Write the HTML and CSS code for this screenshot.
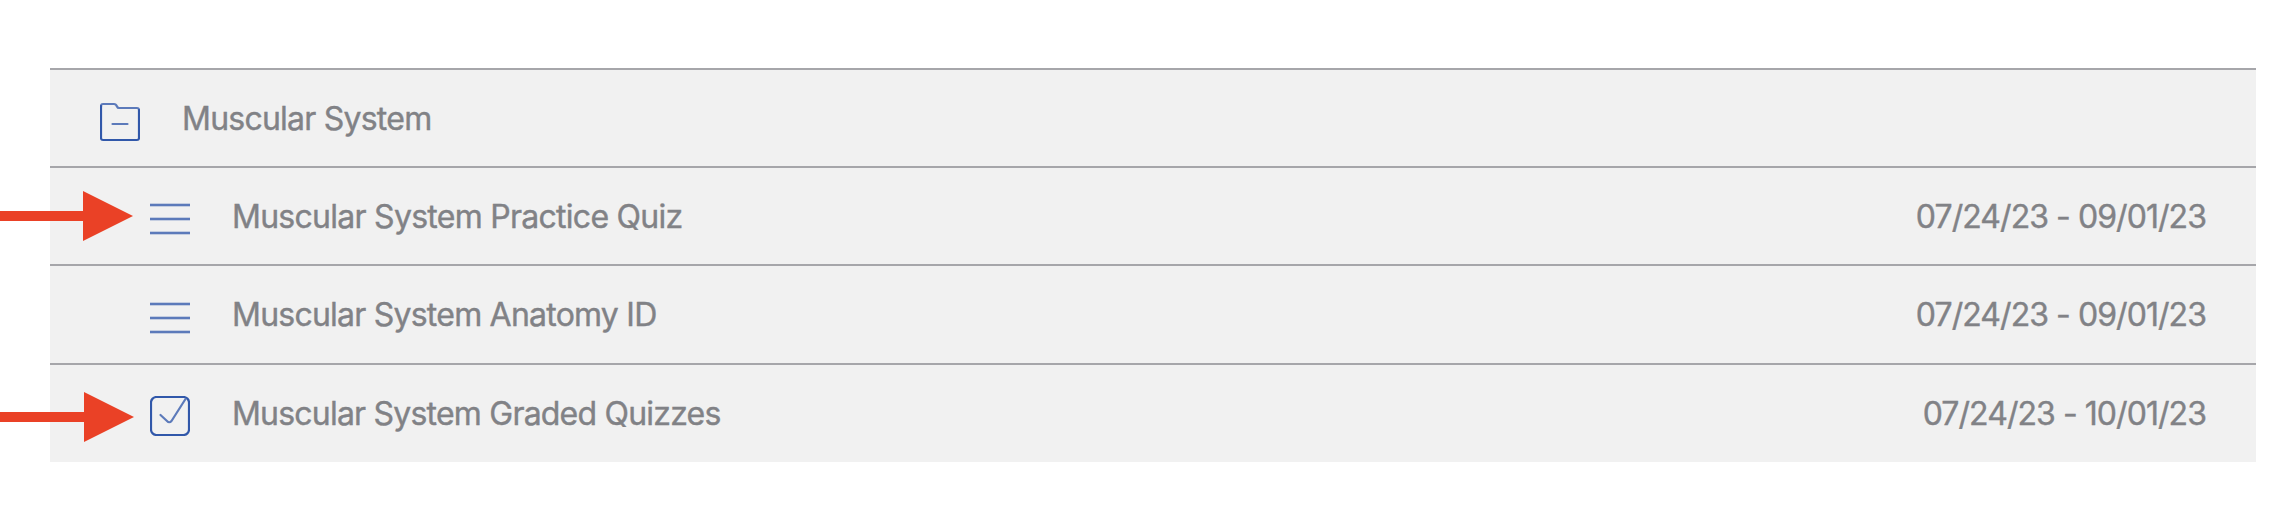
FILE: index.html
```html
<!DOCTYPE html>
<html lang="en">
<head>
<meta charset="utf-8">
<title>Muscular System</title>
<link rel="stylesheet" href="styles.css">
</head>
<body>
<main class="outline">
  <div class="row folder">
    <svg class="icon" width="40" height="40" viewBox="0 0 40 40"><path class="line soft" d="M1 5V4Q1 2 3 2H14Q16 2 17 4.500Q17.600 6 19 6H37Q39 6 39 8"/><path class="line" d="M1 4V36Q1 38 3 38H37Q39 38 39 36V8"/><path class="line soft" d="M12.500 22H27.500"/></svg>
    <span class="title">Muscular System</span>
  </div>
  <div class="row item">
    <svg class="icon list" width="40" height="40" viewBox="0 0 40 40"><path class="halo" d="M0 7H40M0 21H40M0 35H40"/><path class="bar" d="M0 7H40M0 21H40M0 35H40"/></svg>
    <span class="title practice">Muscular System Practice Quiz</span>
    <span class="date">07/24/23 - 09/01/23</span>
  </div>
  <div class="row item tall">
    <svg class="icon check" width="40" height="40" viewBox="0 0 40 40"><path class="halo" d="M0 7H40M0 21H40M0 35H40"/><path class="bar" d="M0 7H40M0 21H40M0 35H40"/></svg>
    <span class="title">Muscular System Anatomy ID</span>
    <span class="date">07/24/23 - 09/01/23</span>
  </div>
  <div class="row item tall">
    <svg class="icon check" width="40" height="40" viewBox="0 0 40 40"><rect class="line" x="1" y="1" width="38" height="38" rx="5.500"/><path class="line soft" d="M10.500 19L17 25Q19.300 27.500 21.500 25L35.500 3"/></svg>
    <span class="title graded">Muscular System Graded Quizzes</span>
    <span class="date">07/24/23 - 10/01/23</span>
  </div>
</main>
<svg class="arrow first" width="133" height="50" viewBox="0 0 133 50"><path d="M0 20H83V0L133 25L83 50V30H0Z"/></svg>
<svg class="arrow second" width="134" height="50" viewBox="0 0 134 50"><path d="M0 20H84V0L134 25L84 50V30H0Z"/></svg>
</body>
</html>
```
FILE: styles.css
```css
body {
  margin: 0;
  background: #fff;
  position: relative;
  font-family: Inter, "Liberation Sans", sans-serif;
}
.outline {
  padding: 68px 14px 64px 50px;
}
.row {
  box-sizing: border-box;
  display: flex;
  height: 98px;
  padding: 0 50px;
  border-top: 2px solid #a6a6aa;
  background: #f1f1f1;
  color: #818286;
  font-size: 32px;
  line-height: 40px;
}
.tall {
  height: 99px;
}
.item {
  padding-left: 100px;
}
.icon {
  flex: none;
  margin: 32px 42px 0 0;
}
.list {
  margin-top: 30px;
}
.check {
  margin-top: 31px;
}
.title,
.date {
  margin-top: 29px;
  white-space: nowrap;
  letter-spacing: -0.77px;
  -webkit-text-stroke: 0.4px #818286;
}
.practice {
  letter-spacing: -0.73px;
}
.graded {
  letter-spacing: -0.79px;
}
.date {
  margin-left: auto;
  letter-spacing: -0.94px;
}
.line,
.halo,
.bar {
  fill: none;
  stroke: #3158aa;
  stroke-width: 2.2;
  stroke-linecap: round;
  stroke-linejoin: round;
}
.soft,
.bar {
  stroke: #5c7aba;
}
.bar {
  stroke-width: 2;
  stroke-linecap: butt;
}
.halo {
  stroke: #c5cee1;
  stroke-width: 4;
  stroke-linecap: butt;
}
.arrow {
  position: absolute;
  left: 0;
  fill: #ea4126;
}
.first {
  top: 191px;
}
.second {
  top: 392px;
}
```
